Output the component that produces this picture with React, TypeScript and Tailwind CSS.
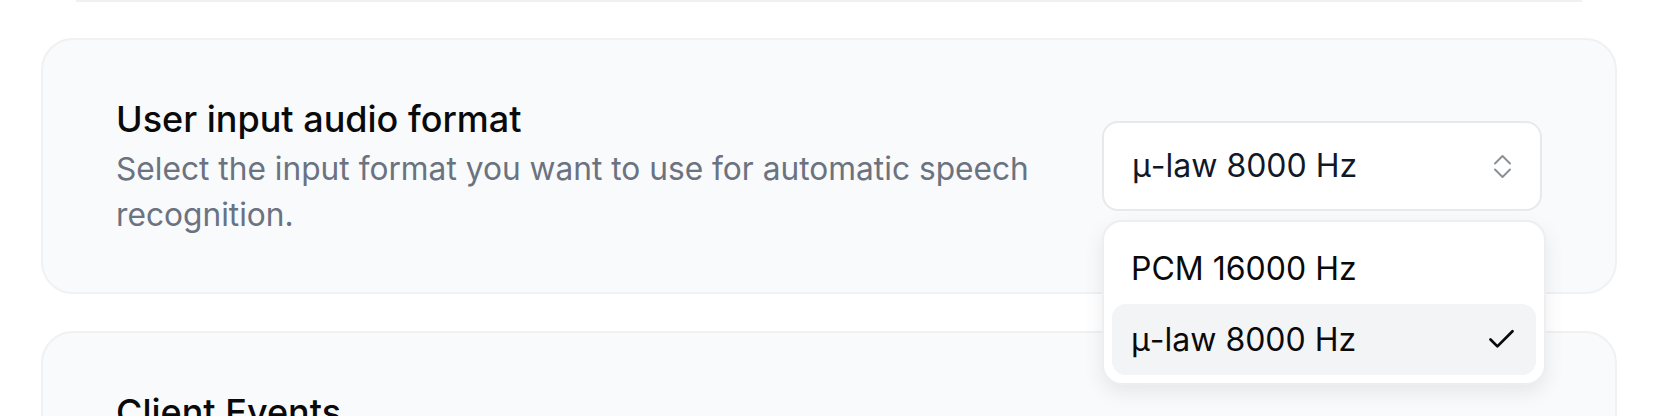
import { Check } from "lucide-react";

/**
 * Audio format settings — the select is shown open, with the listbox
 * floating over the card edge and the next card below.
 */

function ChevronsIcon() {
  return (
    <svg
      width="19"
      height="27"
      viewBox="0 0 19 27"
      fill="none"
      stroke="#8b8f96"
      strokeWidth="2"
      strokeLinecap="round"
      strokeLinejoin="round"
    >
      <polyline points="2,10.5 9.5,3 17,10.5" />
      <polyline points="2,16.5 9.5,24 17,16.5" />
    </svg>
  );
}

const options = ["PCM 16000 Hz", "μ-law 8000 Hz"];

export default function App() {
  const selected = "μ-law 8000 Hz";

  return (
    <div className="min-h-[416px] overflow-hidden bg-white font-['Inter','Noto_Sans',sans-serif] antialiased">
      {/* bottom edge of the section above */}
      <div className="mx-[76px] h-[2px] bg-[#eff0f2]" />

      <div className="mt-[36px] flex flex-col gap-[37px] px-[41px]">
        <div className="relative flex items-center gap-[48px] rounded-[32px] border-2 border-[#eff1f3] bg-[#f9fafb] px-[73px] py-[54px]">
          <div className="min-w-0 flex-1">
            <h3 className="text-[36px] font-medium leading-[50px] text-[#0a0a0a]">
              User input audio format
            </h3>
            <p className="mt-[2px] text-[31.7px] leading-[46px] text-[#6b7280]">
              Select the input format you want to use for automatic speech
              recognition.
            </p>
          </div>

          <div className="relative w-[440px] shrink-0">
            <button className="flex h-[90px] w-full items-center justify-between rounded-[16px] border-2 border-[#e8e9ec] bg-white pl-[28px] pr-[28px] text-[32px] text-[#111827]">
              <span>{selected}</span>
              <ChevronsIcon />
            </button>

            <div className="absolute left-0 right-[-4px] top-[calc(100%+9px)] z-10 rounded-[20px] border-2 border-[#eceef1] bg-white px-[8px] pb-[8px] pt-[11px] shadow-[0_8px_20px_rgba(0,0,0,0.08)]">
              {options.map((o) => (
                <div
                  key={o}
                  className={
                    o === selected
                      ? "flex h-[71px] items-center justify-between rounded-[14px] bg-[#f3f4f6] pl-[19px] pr-[18px] text-[32px] text-[#0a0a0a]"
                      : "flex h-[71px] items-center justify-between rounded-[14px] pl-[19px] pr-[18px] text-[32px] text-[#0a0a0a]"
                  }
                >
                  <span>{o}</span>
                  {o === selected && (
                    <Check size={33} strokeWidth={2} color="#0a0a0a" />
                  )}
                </div>
              ))}
            </div>
          </div>
        </div>

        <div className="h-[200px] rounded-[32px] border-2 border-[#eff1f3] bg-[#f9fafb] px-[73px] pt-[54px]">
          <h3 className="text-[36px] font-medium leading-[50px] text-[#0a0a0a]">
            Client Events
          </h3>
        </div>
      </div>
    </div>
  );
}
